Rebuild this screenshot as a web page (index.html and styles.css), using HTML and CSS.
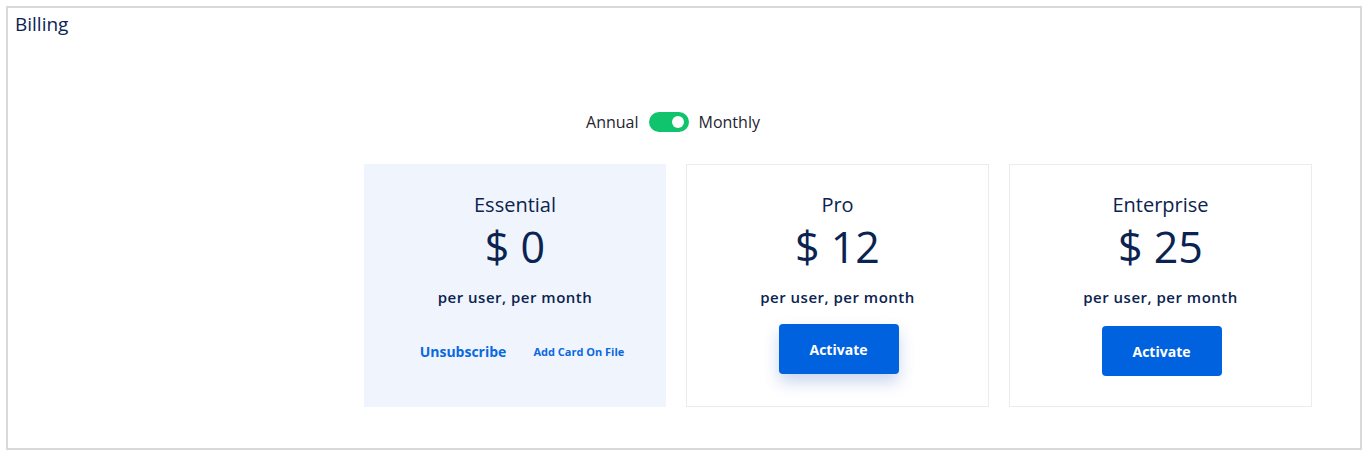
FILE: index.html
```html
<!DOCTYPE html>
<html>
<head>
<meta charset="utf-8">
<link rel="stylesheet" href="styles.css">
</head>
<body>
<div class="frame">
  <h1 class="page-title">Billing</h1>
  <div class="period">
    <span class="period-label">Annual</span>
    <span class="switch"><span class="knob"></span></span>
    <span class="period-label">Monthly</span>
  </div>
  <div class="plans">
    <div class="plan plan-current">
      <div class="plan-name">Essential</div>
      <div class="plan-price">$ 0</div>
      <div class="plan-unit">per user, per month</div>
      <div class="plan-actions links">
        <a class="link link-main">Unsubscribe</a>
        <a class="link link-small">Add Card On File</a>
      </div>
    </div>
    <div class="plan">
      <div class="plan-name">Pro</div>
      <div class="plan-price">$ 12</div>
      <div class="plan-unit">per user, per month</div>
      <div class="plan-actions">
        <button class="btn btn-hover">Activate</button>
      </div>
    </div>
    <div class="plan">
      <div class="plan-name">Enterprise</div>
      <div class="plan-price">$ 25</div>
      <div class="plan-unit">per user, per month</div>
      <div class="plan-actions">
        <button class="btn">Activate</button>
      </div>
    </div>
  </div>
</div>
</body>
</html>
```

FILE: styles.css
```css
* { box-sizing: border-box; }
html, body { margin: 0; padding: 0; background: #ffffff; }
body {
  font-family: "Open Sans", "Noto Sans", sans-serif;
  color: #0b2350;
}
.frame {
  margin: 6px 5px 5px 6px;
  height: 444px;
  border: 2px solid #d9d9d9;
  padding: 4px 7px 0 7px;
}
.page-title {
  margin: 0;
  font-size: 19px;
  line-height: 24px;
  font-weight: 400;
  color: #0b2350;
}
.period {
  display: flex;
  align-items: center;
  justify-content: center;
  gap: 10px;
  margin-top: 74px;
  margin-right: 22px;
  height: 24px;
}
.period-label {
  font-size: 16px;
  color: #1f2430;
}
.switch {
  width: 40px;
  height: 20px;
  border-radius: 10px;
  background: #0fc46c;
  display: flex;
  align-items: center;
  justify-content: flex-end;
  padding-right: 5px;
}
.knob {
  width: 12px;
  height: 12px;
  border-radius: 50%;
  background: #ffffff;
}
.plans {
  display: flex;
  gap: 20px;
  margin-top: 30px;
  margin-left: 349px;
}
.plan {
  width: 303px;
  height: 243px;
  border: 1px solid #ebebf0;
  display: flex;
  flex-direction: column;
  align-items: center;
  padding-top: 26px;
}
.plan-current {
  width: 302px;
  background: #f0f5fd;
  border-color: #f0f5fd;
}
.plan-name {
  font-size: 20px;
  line-height: 28px;
}
.plan-price {
  font-size: 43px;
  line-height: 56px;
}
.plan-unit {
  margin-top: 12px;
  font-size: 15px;
  line-height: 20px;
  font-weight: 600;
  letter-spacing: 0.5px;
}
.plan-actions {
  margin-top: 19px;
  height: 50px;
  display: flex;
  align-items: center;
  justify-content: center;
  padding-left: 2px;
}
.links {
  gap: 27px;
  padding-left: 14px;
}
.link {
  color: #0a68e0;
  font-weight: 700;
  cursor: pointer;
}
.link-main { font-size: 14px; }
.link-small { font-size: 11px; }
.btn {
  width: 120px;
  height: 50px;
  border: none;
  border-radius: 4px;
  background: #0062df;
  color: #ffffff;
  font-family: "Open Sans", "Noto Sans", sans-serif;
  font-size: 14px;
  font-weight: 700;
  cursor: pointer;
}
.btn-hover {
  transform: translateY(-2px);
  box-shadow: 0 8px 16px rgba(0, 70, 180, 0.22);
}
```
